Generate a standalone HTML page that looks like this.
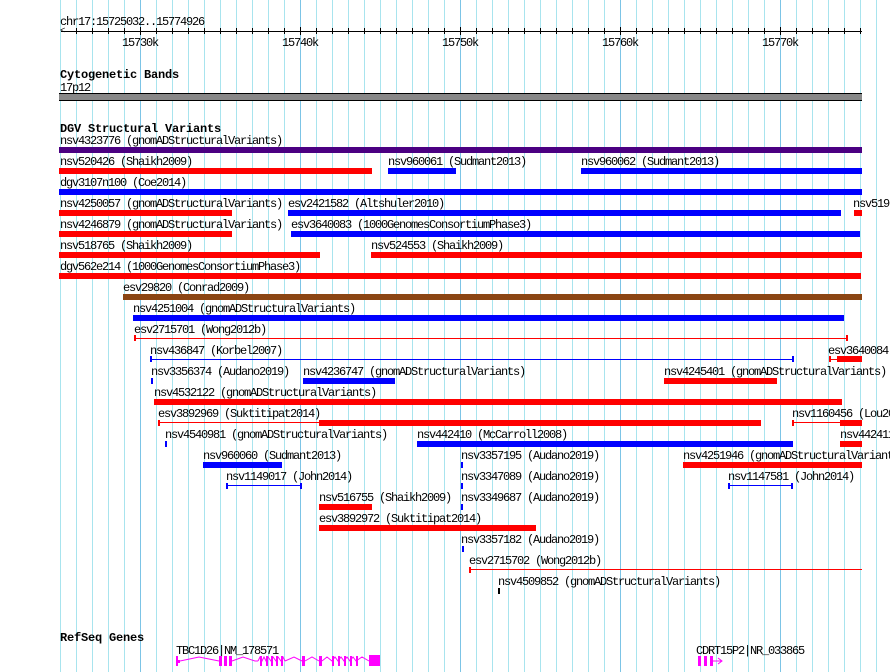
<!DOCTYPE html>
<html><head><meta charset="utf-8"><style>
*{margin:0;padding:0;box-sizing:border-box}
body{width:890px;height:672px;overflow:hidden;background:#fff;position:relative;font-family:"Liberation Mono",monospace}
.g{position:absolute;top:0;bottom:0;left:60px;right:0;background-image:repeating-linear-gradient(to right,#a8e4ee 0 1px,transparent 1px 16px)}
.M{position:absolute;top:0;height:672px;width:1px;background:#7cc4e6}
.l{position:absolute;font-size:12px;line-height:12px;letter-spacing:-1.2px;color:#000;white-space:nowrap;margin-top:2px}
.h{position:absolute;font-size:12px;line-height:12px;font-weight:bold;letter-spacing:-0.2px;white-space:nowrap;margin-top:1px}
.b{position:absolute;height:6px}
.t{position:absolute;height:1px}
.k{position:absolute;width:2px;height:6px}
.r{background:#f00}.u{background:#00f}
.tk{position:absolute;top:28px;width:1px;height:6px;background:#000}
</style></head><body>
<div class="g"></div>
<div class="M" style="left:140px"></div><div class="M" style="left:300px"></div><div class="M" style="left:460px"></div><div class="M" style="left:620px"></div><div class="M" style="left:780px"></div>

<div class="l" style="left:60px;top:14px">chr17:15725032..15774926</div>
<div style="position:absolute;left:61px;top:31px;width:801px;height:1px;background:#000"></div>
<div style="position:absolute;left:60px;top:28px;width:5px;height:7px;font-size:9px;line-height:7px">&lt;</div>
<div class="tk" style="left:76px"></div><div class="tk" style="left:92px"></div><div class="tk" style="left:108px"></div><div class="tk" style="left:124px"></div><div class="tk" style="left:140px;top:27px;height:8px"></div><div class="tk" style="left:156px"></div><div class="tk" style="left:172px"></div><div class="tk" style="left:188px"></div><div class="tk" style="left:204px"></div><div class="tk" style="left:220px"></div><div class="tk" style="left:236px"></div><div class="tk" style="left:252px"></div><div class="tk" style="left:268px"></div><div class="tk" style="left:284px"></div><div class="tk" style="left:300px;top:27px;height:8px"></div><div class="tk" style="left:316px"></div><div class="tk" style="left:332px"></div><div class="tk" style="left:348px"></div><div class="tk" style="left:364px"></div><div class="tk" style="left:380px"></div><div class="tk" style="left:396px"></div><div class="tk" style="left:412px"></div><div class="tk" style="left:428px"></div><div class="tk" style="left:444px"></div><div class="tk" style="left:460px;top:27px;height:8px"></div><div class="tk" style="left:476px"></div><div class="tk" style="left:492px"></div><div class="tk" style="left:508px"></div><div class="tk" style="left:524px"></div><div class="tk" style="left:540px"></div><div class="tk" style="left:556px"></div><div class="tk" style="left:572px"></div><div class="tk" style="left:588px"></div><div class="tk" style="left:604px"></div><div class="tk" style="left:620px;top:27px;height:8px"></div><div class="tk" style="left:636px"></div><div class="tk" style="left:652px"></div><div class="tk" style="left:668px"></div><div class="tk" style="left:684px"></div><div class="tk" style="left:700px"></div><div class="tk" style="left:716px"></div><div class="tk" style="left:732px"></div><div class="tk" style="left:748px"></div><div class="tk" style="left:764px"></div><div class="tk" style="left:780px;top:27px;height:8px"></div><div class="tk" style="left:796px"></div><div class="tk" style="left:812px"></div><div class="tk" style="left:828px"></div><div class="tk" style="left:844px"></div><div class="tk" style="left:860px"></div>
<div class="l" style="left:122px;top:35px">15730k</div>
<div class="l" style="left:282px;top:35px">15740k</div>
<div class="l" style="left:442px;top:35px">15750k</div>
<div class="l" style="left:602px;top:35px">15760k</div>
<div class="l" style="left:762px;top:35px">15770k</div>

<div class="h" style="left:60px;top:68px">Cytogenetic Bands</div>
<div class="l" style="left:60px;top:80px">17p12</div>
<div style="position:absolute;left:59px;top:93px;width:803px;height:8px;background:#888;border:1px solid #000;border-left:none;border-right:none"></div>

<div class="h" style="left:60px;top:122px">DGV Structural Variants</div>

<div class="l" style="left:60px;top:133px">nsv4323776 (gnomADStructuralVariants)</div>
<div class="b" style="left:59px;top:147px;width:803px;background:#4b0082"></div>

<div class="l" style="left:60px;top:154px">nsv520426 (Shaikh2009)</div><div class="b r" style="left:59px;top:168px;width:313px"></div>
<div class="l" style="left:388px;top:154px">nsv960061 (Sudmant2013)</div><div class="b u" style="left:388px;top:168px;width:68px"></div>
<div class="l" style="left:581px;top:154px">nsv960062 (Sudmant2013)</div><div class="b u" style="left:581px;top:168px;width:281px"></div>

<div class="l" style="left:60px;top:175px">dgv3107n100 (Coe2014)</div><div class="b u" style="left:59px;top:189px;width:803px"></div>

<div class="l" style="left:60px;top:196px">nsv4250057 (gnomADStructuralVariants)</div><div class="b r" style="left:59px;top:210px;width:173px"></div>
<div class="l" style="left:288px;top:196px">esv2421582 (Altshuler2010)</div><div class="b u" style="left:288px;top:210px;width:553px"></div>
<div class="l" style="left:853px;top:196px">nsv519</div><div class="b r" style="left:854px;top:210px;width:8px"></div>

<div class="l" style="left:60px;top:217px">nsv4246879 (gnomADStructuralVariants)</div><div class="b r" style="left:59px;top:231px;width:173px"></div>
<div class="l" style="left:291px;top:217px">esv3640083 (1000GenomesConsortiumPhase3)</div><div class="b u" style="left:291px;top:231px;width:569px"></div>

<div class="l" style="left:60px;top:238px">nsv518765 (Shaikh2009)</div><div class="b r" style="left:59px;top:252px;width:261px"></div>
<div class="l" style="left:371px;top:238px">nsv524553 (Shaikh2009)</div><div class="b r" style="left:371px;top:252px;width:491px"></div>

<div class="l" style="left:60px;top:259px">dgv562e214 (1000GenomesConsortiumPhase3)</div><div class="b r" style="left:59px;top:273px;width:802px"></div>

<div class="l" style="left:123px;top:280px">esv29820 (Conrad2009)</div><div class="b" style="left:123px;top:294px;width:739px;background:#8b4513"></div>

<div class="l" style="left:133px;top:301px">nsv4251004 (gnomADStructuralVariants)</div><div class="b u" style="left:133px;top:315px;width:711px"></div>

<div class="l" style="left:134px;top:322px">esv2715701 (Wong2012b)</div><div class="t r" style="left:134px;top:338px;width:713px"></div><div class="k r" style="left:134px;top:335px"></div><div class="k r" style="left:846px;top:335px"></div>

<div class="l" style="left:150px;top:343px">nsv436847 (Korbel2007)</div><div class="t u" style="left:150px;top:359px;width:643px"></div><div class="k u" style="left:150px;top:356px"></div><div class="k u" style="left:792px;top:356px"></div>
<div class="l" style="left:828px;top:343px">esv3640084</div><div class="k r" style="left:829px;top:356px"></div><div class="t r" style="left:829px;top:359px;width:9px"></div><div class="b r" style="left:837px;top:356px;width:25px"></div>

<div class="l" style="left:151px;top:364px">nsv3356374 (Audano2019)</div><div class="b u" style="left:151px;top:378px;width:2px"></div>
<div class="l" style="left:303px;top:364px">nsv4236747 (gnomADStructuralVariants)</div><div class="b u" style="left:303px;top:378px;width:92px"></div>
<div class="l" style="left:664px;top:364px">nsv4245401 (gnomADStructuralVariants)</div><div class="b r" style="left:664px;top:378px;width:113px"></div>

<div class="l" style="left:154px;top:385px">nsv4532122 (gnomADStructuralVariants)</div><div class="b r" style="left:154px;top:399px;width:688px"></div>

<div class="l" style="left:158px;top:406px">esv3892969 (Suktitipat2014)</div><div class="k r" style="left:158px;top:420px"></div><div class="t r" style="left:158px;top:422px;width:161px"></div><div class="b r" style="left:319px;top:420px;width:442px"></div>
<div class="l" style="left:792px;top:406px">nsv1160456 (Lou2014)</div><div class="k r" style="left:792px;top:420px"></div><div class="t r" style="left:792px;top:422px;width:48px"></div><div class="b r" style="left:840px;top:420px;width:22px"></div>

<div class="l" style="left:165px;top:427px">nsv4540981 (gnomADStructuralVariants)</div><div class="b u" style="left:165px;top:441px;width:2px"></div>
<div class="l" style="left:417px;top:427px">nsv442410 (McCarroll2008)</div><div class="b u" style="left:417px;top:441px;width:376px"></div>
<div class="l" style="left:840px;top:427px">nsv442411</div><div class="b r" style="left:840px;top:441px;width:22px"></div>

<div class="l" style="left:203px;top:448px">nsv960060 (Sudmant2013)</div><div class="b u" style="left:203px;top:462px;width:79px"></div>
<div class="l" style="left:461px;top:448px">nsv3357195 (Audano2019)</div><div class="b u" style="left:461px;top:462px;width:2px"></div>
<div class="l" style="left:683px;top:448px">nsv4251946 (gnomADStructuralVariants)</div><div class="b r" style="left:683px;top:462px;width:179px"></div>

<div class="l" style="left:226px;top:469px">nsv1149017 (John2014)</div><div class="k u" style="left:226px;top:483px"></div><div class="t u" style="left:226px;top:485px;width:75px"></div><div class="k u" style="left:300px;top:483px"></div>
<div class="l" style="left:461px;top:469px">nsv3347089 (Audano2019)</div><div class="b u" style="left:461px;top:483px;width:2px"></div>
<div class="l" style="left:728px;top:469px">nsv1147581 (John2014)</div><div class="k u" style="left:728px;top:483px"></div><div class="t u" style="left:728px;top:485px;width:64px"></div><div class="k u" style="left:791px;top:483px"></div>

<div class="l" style="left:319px;top:490px">nsv516755 (Shaikh2009)</div><div class="b r" style="left:319px;top:504px;width:53px"></div>
<div class="l" style="left:461px;top:490px">nsv3349687 (Audano2019)</div><div class="b u" style="left:461px;top:504px;width:2px"></div>

<div class="l" style="left:319px;top:511px">esv3892972 (Suktitipat2014)</div><div class="b r" style="left:319px;top:525px;width:217px"></div>

<div class="l" style="left:461px;top:532px">nsv3357182 (Audano2019)</div><div class="b u" style="left:462px;top:546px;width:2px"></div>

<div class="l" style="left:469px;top:553px">esv2715702 (Wong2012b)</div><div class="k r" style="left:469px;top:567px"></div><div class="t r" style="left:469px;top:569px;width:393px"></div>

<div class="l" style="left:498px;top:574px">nsv4509852 (gnomADStructuralVariants)</div><div class="b" style="left:498px;top:588px;width:2px;background:#000"></div>

<div class="h" style="left:60px;top:631px">RefSeq Genes</div>
<div class="l" style="left:176px;top:643px">TBC1D26|NM_178571</div>
<div class="l" style="left:696px;top:643px">CDRT15P2|NR_033865</div>
<svg style="position:absolute;left:0;top:0" width="890" height="672">
<g fill="#f0f" stroke="none">
<rect x="176" y="656" width="2" height="10"/><rect x="178" y="660" width="2" height="3"/>
<rect x="219" y="656" width="3" height="10"/><rect x="224" y="656" width="3" height="10"/><rect x="229" y="656" width="3" height="10"/>
<rect x="260" y="656" width="2" height="10"/><rect x="266" y="656" width="2" height="10"/><rect x="271" y="656" width="2" height="10"/><rect x="276" y="656" width="2" height="10"/><rect x="281" y="656" width="2" height="10"/>
<rect x="302" y="656" width="3" height="10"/><rect x="319" y="656" width="3" height="10"/>
<rect x="332" y="656" width="2" height="10"/><rect x="338" y="656" width="2" height="10"/><rect x="344" y="656" width="2" height="10"/><rect x="350" y="656" width="2" height="10"/><rect x="356" y="656" width="2" height="10"/>
<rect x="369" y="655" width="11" height="11"/>
<rect x="698" y="656" width="3" height="10"/><rect x="704" y="656" width="3" height="10"/><rect x="710" y="656" width="3" height="10"/>
</g>
<g fill="none" stroke="#f0f" stroke-width="1">
<polyline points="180,661 199,657 219,661"/>
<polyline points="232,661 243,657 255,661 258,661"/>
<polyline points="258,661 260,657 262,661 264,657 266,661 268,657 271,661 273,657 276,661 278,657 281,661 283,657 285,661"/>
<polyline points="285,661 294,657 302,661"/>
<polyline points="305,661 312,657 319,661"/>
<polyline points="322,661 327,657 332,661 335,657 338,661 341,657 344,661 347,657 350,661 353,657 356,661 362,657 369,661"/>
<polyline points="713,661 722,661"/><polyline points="718,658 722,661 718,664"/>
</g>
</svg>
</body></html>
